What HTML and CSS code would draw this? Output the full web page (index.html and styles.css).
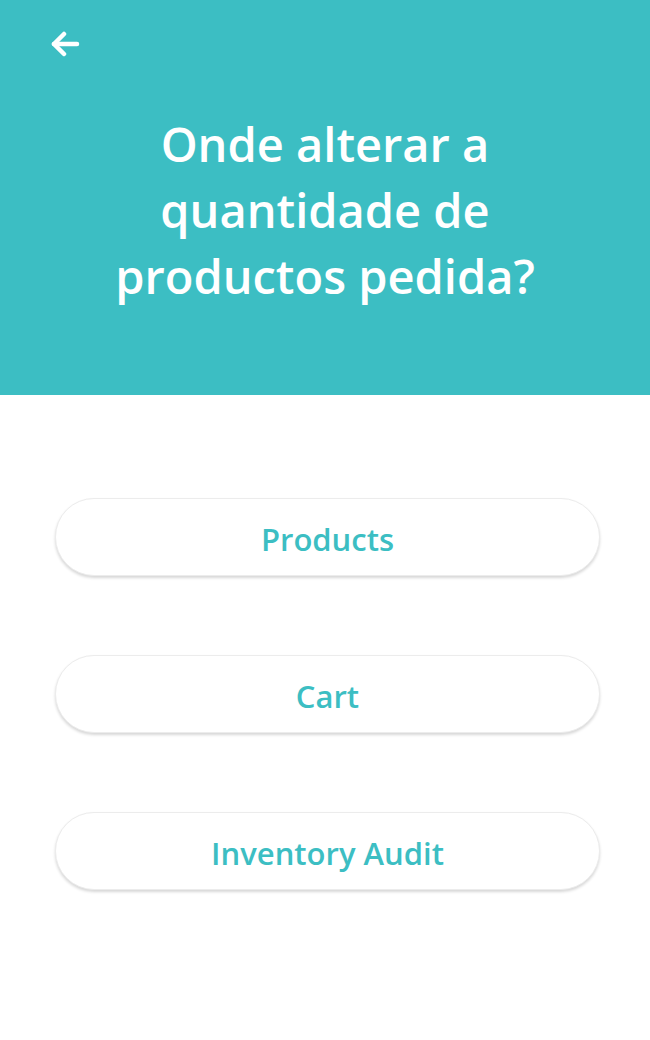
FILE: index.html
```html
<!DOCTYPE html>
<html lang="pt">
<head>
<meta charset="utf-8">
<title>Onde alterar a quantidade</title>
<link rel="stylesheet" href="styles.css">
</head>
<body>
<header class="hero">
  <button class="back" aria-label="Voltar">
    <svg width="30" height="26" viewBox="0 0 30 26" fill="none" stroke="#fff" stroke-width="4.5" stroke-linecap="round" stroke-linejoin="round">
      <path d="M27 13H4"/>
      <path d="M14 3L4 13l10 10"/>
    </svg>
  </button>
  <h1 class="title">Onde alterar a quantidade de productos pedida?</h1>
</header>
<main class="options">
  <button class="option">Products</button>
  <button class="option">Cart</button>
  <button class="option">Inventory Audit</button>
</main>
</body>
</html>
```

FILE: styles.css
```css
* { box-sizing: border-box; }
html, body { margin: 0; padding: 0; background: #fff; }
body {
  font-family: "Open Sans", "Noto Sans", sans-serif;
  width: 650px;
  height: 1040px;
  overflow: hidden;
}
.hero {
  background: #3cbec3;
  height: 395px;
  padding: 31px 0 0 0;
}
.back {
  display: block;
  margin-left: 50px;
  padding: 0;
  border: 0;
  background: none;
  width: 30px;
  height: 26px;
}
.back svg { display: block; }
.title {
  margin: 54px auto 0;
  width: 480px;
  color: #fff;
  font-weight: 600;
  font-size: 47px;
  line-height: 66px;
  text-align: center;
}
.options {
  display: flex;
  flex-direction: column;
  gap: 79px;
  padding: 103px 50px 0 55px;
}
.option {
  height: 78px;
  width: 545px;
  border-radius: 39px;
  border: 1px solid #ececec;
  background: #fff;
  box-shadow: 0 2px 3px rgba(0,0,0,0.16);
  color: #3cbec3;
  font-family: "Open Sans", "Noto Sans", sans-serif;
  font-weight: 600;
  font-size: 31px;
  padding: 3px 0 0 0;
}
```
